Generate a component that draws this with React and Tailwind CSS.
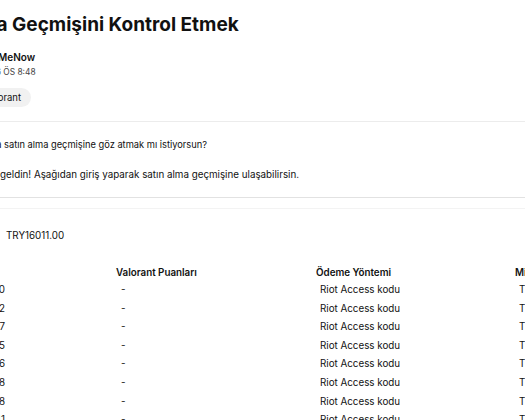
export default function App() {
  const rows = [
    "2024-03-14 21:30",
    "2024-02-27 18:12",
    "2024-02-03 20:47",
    "2024-01-19 16:05",
    "2023-12-28 22:16",
    "2023-12-09 19:38",
    "2023-11-22 17:58",
    "2023-11-02 20:41",
  ];
  return (
    <div
      className="w-[525px] h-[420px] overflow-hidden bg-white text-[#111111]"
      style={{ fontFamily: "Inter, 'Noto Sans', sans-serif" }}
    >
      <div className="flex flex-col">
        <div className="mt-[13px] -ml-[92px] whitespace-nowrap text-[19px] leading-[24px] font-bold">
          Satın Alma Geçmişini Kontrol Etmek
        </div>
        <div className="mt-[13px] -ml-[42px] whitespace-nowrap text-[10px] leading-[14px] font-semibold">
          <span className="inline-block w-[40px]" />
          MeNow
        </div>
        <div className="mt-[2px] -ml-[43px] whitespace-nowrap text-[8.4px] leading-[12px] text-[#444444]">
          16.03.2026 ÖS 8:48
        </div>
        <div className="mt-[10px] -ml-[26px] flex">
          <span className="h-[19px] px-[10px] rounded-full bg-[#f1f1f1] text-[9.5px] leading-[19px] whitespace-nowrap">
            Valorant
          </span>
        </div>
        <div className="mt-[14px] h-px bg-[#ececec]" />
        <div className="mt-[16px] -ml-[25px] whitespace-nowrap text-[9.3px] leading-[14px]">
          Yoksa satın alma geçmişine göz atmak mı istiyorsun?
        </div>
        <div className="mt-[16px] -ml-[21px] whitespace-nowrap text-[9.8px] leading-[14px]">
          Hoş geldin! Aşağıdan giriş yaparak satın alma geçmişine ulaşabilirsin.
        </div>
        <div className="mt-[15px] h-px bg-[#e2e2e2]" />
        <div className="mt-[10px] h-px bg-[#f3f3f3]" />
        <div className="mt-[20px] -ml-[90px] flex gap-[20px] whitespace-nowrap text-[9.8px] leading-[14px]">
          <span className="w-[76px] font-semibold">Toplam harcama</span>
          <span>TRY16011.00</span>
        </div>
        <div className="mt-[22px] -ml-[84px] text-[9.8px]">
          <div className="grid grid-cols-[200px_200px_199px_200px] font-semibold leading-[16px] h-[16px] whitespace-nowrap">
            <div>İşlem Tarihi</div>
            <div>Valorant Puanları</div>
            <div>Ödeme Yöntemi</div>
            <div>Miktar</div>
          </div>
          {rows.map((d, i) => (
            <div
              key={i}
              className="grid grid-cols-[200px_200px_199px_200px] leading-[18.6px] h-[18.6px] whitespace-nowrap"
            >
              <div className="text-right pr-[111px]">{d}</div>
              <div className="pl-[5px]">-</div>
              <div className="pl-[4px]">Riot Access kodu</div>
              <div className="pl-[4px]">TRY1000.00</div>
            </div>
          ))}
        </div>
      </div>
    </div>
  );
}
